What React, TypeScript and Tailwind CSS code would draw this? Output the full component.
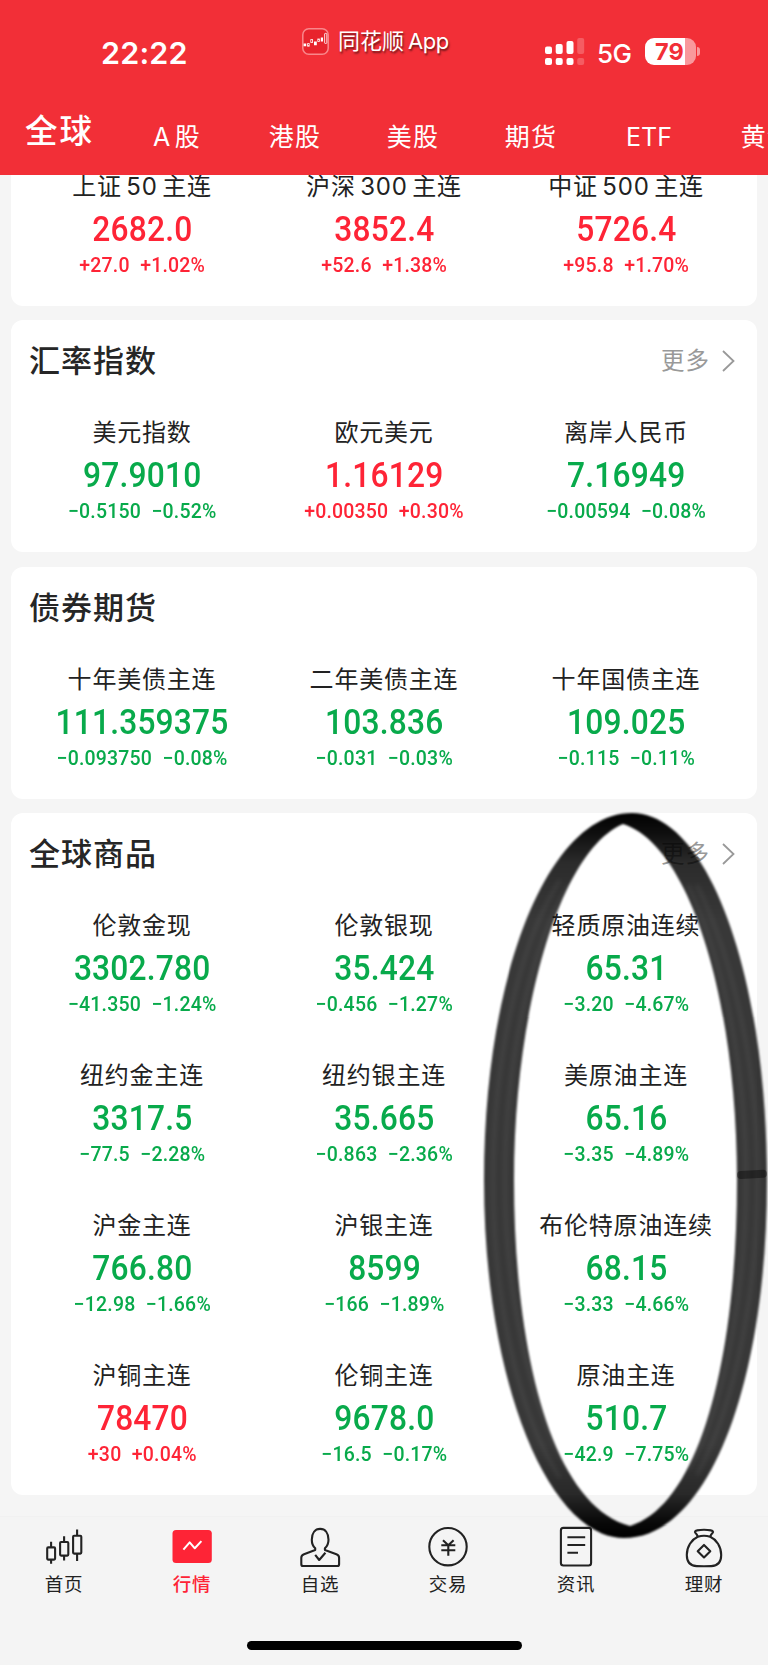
import clsx from "clsx";
import type { ReactNode } from "react";

type Quote = {
  name: string;
  value: string;
  change: string;
  percent: string;
};

type Section = {
  title?: string;
  more?: boolean;
  quotes: Quote[];
};

const tabs = ["A 股", "港股", "美股", "期货", "ETF", "黄金"];

const sections: Section[] = [
  {
    quotes: [
      { name: "上证 50 主连", value: "2682.0", change: "+27.0", percent: "+1.02%" },
      { name: "沪深 300 主连", value: "3852.4", change: "+52.6", percent: "+1.38%" },
      { name: "中证 500 主连", value: "5726.4", change: "+95.8", percent: "+1.70%" },
    ],
  },
  {
    title: "汇率指数",
    more: true,
    quotes: [
      { name: "美元指数", value: "97.9010", change: "−0.5150", percent: "−0.52%" },
      { name: "欧元美元", value: "1.16129", change: "+0.00350", percent: "+0.30%" },
      { name: "离岸人民币", value: "7.16949", change: "−0.00594", percent: "−0.08%" },
    ],
  },
  {
    title: "债券期货",
    quotes: [
      { name: "十年美债主连", value: "111.359375", change: "−0.093750", percent: "−0.08%" },
      { name: "二年美债主连", value: "103.836", change: "−0.031", percent: "−0.03%" },
      { name: "十年国债主连", value: "109.025", change: "−0.115", percent: "−0.11%" },
    ],
  },
  {
    title: "全球商品",
    more: true,
    quotes: [
      { name: "伦敦金现", value: "3302.780", change: "−41.350", percent: "−1.24%" },
      { name: "伦敦银现", value: "35.424", change: "−0.456", percent: "−1.27%" },
      { name: "轻质原油连续", value: "65.31", change: "−3.20", percent: "−4.67%" },
      { name: "纽约金主连", value: "3317.5", change: "−77.5", percent: "−2.28%" },
      { name: "纽约银主连", value: "35.665", change: "−0.863", percent: "−2.36%" },
      { name: "美原油主连", value: "65.16", change: "−3.35", percent: "−4.89%" },
      { name: "沪金主连", value: "766.80", change: "−12.98", percent: "−1.66%" },
      { name: "沪银主连", value: "8599", change: "−166", percent: "−1.89%" },
      { name: "布伦特原油连续", value: "68.15", change: "−3.33", percent: "−4.66%" },
      { name: "沪铜主连", value: "78470", change: "+30", percent: "+0.04%" },
      { name: "伦铜主连", value: "9678.0", change: "−16.5", percent: "−0.17%" },
      { name: "原油主连", value: "510.7", change: "−42.9", percent: "−7.75%" },
    ],
  },
];

const StatusBar = () => (
  <div className="flex h-[96px] items-start text-white">
    <div className="ml-[101px] mt-[33px] w-[201px] text-[30.5px] leading-[40px] font-semibold tracking-[0.2px]">
      22:22
    </div>

    {/* App badge */}
    <div className="mt-[28px] flex w-[243px] items-center">
      <svg className="-mt-[1px]" width="27" height="27" viewBox="0 0 27 27" fill="none">
        <rect x="0.8" y="0.8" width="25.4" height="25.4" rx="6" fill="#e8242d" stroke="#f9878b" strokeWidth="1.5" />
        <path d="M1.6 15.6h2.6v2.6H1.6zM12 13.6h2.8v3.6H12zM18.8 9.4h2.2v4.2h-2.2z" fill="#fff" />
        <g stroke="#fff" strokeWidth="0.8">
          <rect x="5.6" y="15.6" width="1.6" height="2.6" />
          <rect x="8.8" y="11.6" width="1.8" height="2.8" />
          <rect x="15.8" y="11" width="1.6" height="2.4" />
          <rect x="22.6" y="5.4" width="2.2" height="10" rx="0.6" />
        </g>
      </svg>
      <span className="ml-[9px] text-[22px] leading-[27px] whitespace-nowrap [text-shadow:1px_2px_2px_rgba(0,0,0,0.55)]">
        同花顺<span className="ml-[4px] tracking-[-0.4px]">App</span>
      </span>
    </div>

    <svg className="mt-[38px]" width="40" height="28" viewBox="0 0 40 28" fill="#fff">
      <rect x="0" y="8.5" width="7" height="7.5" rx="2" />
      <rect x="10.7" y="6" width="7" height="10" rx="2" />
      <rect x="21.5" y="3" width="7" height="13" rx="2" />
      <rect x="32.2" y="0" width="7" height="16" rx="2" opacity="0.22" />
      <rect x="0" y="20" width="7" height="7" rx="2" />
      <rect x="10.7" y="20" width="7" height="7" rx="2" />
      <rect x="21.5" y="20" width="7" height="7" rx="2" />
      <rect x="32.2" y="20" width="7" height="7" rx="2" opacity="0.22" />
    </svg>
    <span className="mt-[38px] ml-[12px] w-[48px] text-[26px] leading-[32px] font-[450] tracking-[-0.5px]">
      5G
    </span>

    {/* Battery */}
    <div className="mt-[38px] flex items-center">
      <div className="h-[27px] w-[51px] rounded-[9px] bg-gradient-to-r from-white from-[79%] to-[#f9989c] to-[79%] pl-[10px] text-[23.5px] leading-[27px] font-bold text-[#f22f37]">
        79
      </div>
      <div className="ml-[1px] h-[9px] w-[3px] rounded-r-full bg-[#f9989c]" />
    </div>
  </div>
);

const Header = () => (
  <header className="relative z-10 h-[175px] overflow-hidden bg-[#f22f37]">
    <StatusBar />
    <nav className="flex h-[79px] text-white">
      <div className="w-[118px] shrink-0 pt-[12px] pl-[25px] text-[32.5px] leading-[48px] font-medium tracking-[2px]">
        全球
      </div>
      {tabs.map((tab) => (
        <div
          key={tab}
          className={clsx(
            "w-[118px] shrink-0 pt-[21px] text-center text-[25px] leading-[40px] [word-spacing:-5px]",
            tab === "ETF" ? "tracking-normal" : "tracking-[1.2px]"
          )}
        >
          {tab}
        </div>
      ))}
    </nav>
  </header>
);

const QuoteCell = ({ name, value, change, percent }: Quote) => (
  <div
    className={clsx(
      "flex h-[150px] flex-col items-center pt-[14px] whitespace-nowrap",
      change.startsWith("+") ? "text-[#fe2436]" : "text-[#08aa4b]"
    )}
  >
    <div className="text-[24px] leading-[34px] tracking-[0.8px] text-[#222] [word-spacing:-3px]">{name}</div>
    <div className="scale-x-[0.92] pl-[1px] font-['Roboto'] text-[34.5px] leading-[50px] font-medium tracking-[0.2px]">
      {value}
    </div>
    <div className="flex scale-x-[0.95] gap-[11px] font-['Roboto'] text-[20.5px] leading-[23px] font-medium tracking-[0.2px]">
      <span>{change}</span>
      <span>{percent}</span>
    </div>
  </div>
);

const SectionCard = ({ title, more, quotes }: Section) => (
  <section className="rounded-xl bg-white px-[10px]">
    {title && (
      <div className="flex h-[82px] items-center justify-between pr-[12px] pl-[8px]">
        <h2 className="text-[31px] leading-[40px] font-medium tracking-[1px] text-[#262626]">{title}</h2>
        {more && (
          <div className="flex items-center text-[#999]">
            <span className="text-[23.5px] leading-[36px] tracking-[1px]">更多</span>
            <svg className="ml-[12px]" width="13" height="22" viewBox="0 0 13 22" fill="none" stroke="currentColor" strokeWidth="1.8">
              <path d="M1 1l10.5 10L1 21" />
            </svg>
          </div>
        )}
      </div>
    )}
    <div className="grid grid-cols-3">
      {quotes.map((quote) => (
        <QuoteCell key={quote.name} {...quote} />
      ))}
    </div>
  </section>
);

const NavIcon = ({ children }: { children: ReactNode }) => (
  <svg
    width="42"
    height="42"
    viewBox="0 0 42 42"
    fill="none"
    stroke="currentColor"
    strokeWidth="2.1"
    strokeLinejoin="round"
  >
    {children}
  </svg>
);

const navItems = [
  {
    label: "首页",
    icon: (
      <>
        <rect x="4.2" y="21.4" width="7.9" height="12.2" rx="1" />
        <rect x="17.1" y="16" width="8.2" height="13.6" rx="1" />
        <rect x="30.1" y="9.8" width="8.2" height="17.8" rx="1" />
        <path d="M8.1 15.8v5.6M8.1 33.6v4.2M21.1 10.2v5.8M21.1 29.6v4.8M34.1 3.4v6.4M34.1 27.6v7.4" />
      </>
    ),
  },
  {
    label: "行情",
    active: true,
    icon: (
      <>
        <rect x="1.5" y="4" width="39.3" height="33" rx="3.5" fill="currentColor" stroke="none" />
        <path d="M12.4 23.7l6.3-7.3 5.1 5.9 6.6-7.2" stroke="#fff" strokeWidth="2" />
      </>
    ),
  },
  {
    label: "自选",
    icon: (
      <>
        <path d="M16.2 22.3c-2.4-2.2-3.4-4.8-3.4-8.6 0-6.6 3.2-10.8 8.3-10.8s8.4 4.2 8.4 10.8c0 3.8-1.2 6.4-3.6 8.6v1.8l11.5 4.1c1.8.7 2.7 1.8 2.7 3.6v6.4c0 1.2-.6 1.8-1.8 1.8H4.1c-1.2 0-1.8-.6-1.8-1.8v-6.4c0-1.8.9-2.9 2.7-3.6l11.2-4.1z" />
        <path d="M16.2 28.8l4 5.2 6.2-7.2" />
      </>
    ),
  },
  {
    label: "交易",
    icon: (
      <>
        <circle cx="21" cy="20.7" r="18.7" />
        <path d="M16 14.3l5.3 5 5.3-5M21.3 19.3v10.4M14.3 19.2h14M14.3 24.3h14" />
      </>
    ),
  },
  {
    label: "资讯",
    icon: (
      <>
        <rect x="5.9" y="1.9" width="30.2" height="37.6" rx="2.5" />
        <path d="M12.4 11.3h17.8M12.4 19h17.8M12.4 26.7h10.6" />
      </>
    ),
  },
  {
    label: "理财",
    icon: (
      <>
        <path d="M14.8 10.8c-.4-1.8-1.4-3-2.5-4-1-1 .4-2.2 1.7-2.4 4.6-.9 9.4-.9 14 0 1.3.2 2.7 1.4 1.7 2.4-1.1 1-2.1 2.2-2.5 4-4-1.3-8.4-1.3-12.4 0z" />
        <path d="M14.8 10.8C8.6 13.6 3.8 20.4 3.8 29c0 7.4 3.8 10.9 10 11.1 4.8.2 9.6.2 14.4 0 6.2-.2 10-3.7 10-11.1 0-8.6-4.8-15.4-11-18.2" />
        <path d="M21 18.9l6.3 6.3-6.3 6.3-6.3-6.3z" />
      </>
    ),
  },
];

const BottomNav = () => (
  <footer className="flex h-[149px] flex-col border-t border-[#f1f1f1] bg-[#f4f4f4]">
    <nav className="grid grid-cols-6 pt-[9px]">
      {navItems.map(({ label, active, icon }) => (
        <div
          key={label}
          className={clsx("flex flex-col items-center", active ? "text-[#fe2436]" : "text-[#222]")}
        >
          <NavIcon>{icon}</NavIcon>
          <span className={clsx("mt-[2px] text-[18.5px] leading-[28px] tracking-[0.8px]", active && "font-medium")}>
            {label}
          </span>
        </div>
      ))}
    </nav>
    <div className="mx-auto mt-[43px] h-[9px] w-[275px] rounded-full bg-black" />
  </footer>
);

// Hand-drawn marker ring around the crude oil column
const MarkerRing = () => (
  <svg
    className="pointer-events-none absolute top-[800px] left-[470px] z-20"
    width="298"
    height="750"
    viewBox="470 800 298 750"
    fill="none"
  >
    <defs>
      <linearGradient id="ink" x1="0" y1="812" x2="0" y2="1538" gradientUnits="userSpaceOnUse">
        <stop offset="0" stopOpacity="1" />
        <stop offset="0.03" stopOpacity="0.94" />
        <stop offset="0.07" stopOpacity="0.83" />
        <stop offset="0.15" stopOpacity="0.78" />
        <stop offset="0.87" stopOpacity="0.78" />
        <stop offset="0.94" stopOpacity="0.84" />
        <stop offset="0.98" stopOpacity="0.97" />
        <stop offset="1" stopOpacity="1" />
      </linearGradient>
      <filter id="soft" x="-5%" y="-5%" width="110%" height="110%">
        <feGaussianBlur stdDeviation="1.2" />
      </filter>
      <filter id="streak" x="-5%" y="-5%" width="110%" height="110%">
        <feGaussianBlur stdDeviation="2" />
      </filter>
    </defs>
    <path
      d="M632 813C548 813 484 975 484 1180S550 1538 624 1538C708 1538 767 1385 767 1180S708 813 632 813ZM623 824C690 845 737 1000 737 1180S699 1505 630 1526C551 1505 514 1350 514 1180S560 850 623 824Z"
      fill="url(#ink)"
      fillRule="evenodd"
      filter="url(#soft)"
    />
    <g stroke="#fff" strokeWidth="4" opacity="0.05" filter="url(#streak)">
      <path d="M560 880C515 950 493 1070 493 1180S515 1410 560 1478" />
      <path d="M569 885C528 950 505 1070 505 1180S528 1400 569 1470" />
      <path d="M697 885C738 970 758 1080 758 1180S738 1400 697 1475" />
      <path d="M688 885C728 970 746 1080 746 1180S728 1400 688 1470" />
    </g>
    <path d="M741 1175L763 1173.8" stroke="#000" strokeWidth="8" strokeLinecap="round" opacity="0.38" />
  </svg>
);

const App = () => {
  return (
    <div className="relative flex h-[1665px] w-[768px] flex-col overflow-hidden bg-[#f5f5f5] font-['Inter','Noto_Sans_CJK_SC',sans-serif]">
      <Header />

      {/* The first card is scrolled partly under the header */}
      <main className="-mt-[19px] flex h-[1360px] flex-col gap-[14.4px] px-[11px]">
        {sections.map((section) => (
          <SectionCard key={section.title ?? "index-futures"} {...section} />
        ))}
      </main>

      <BottomNav />
      <MarkerRing />
    </div>
  );
};

export default App;
